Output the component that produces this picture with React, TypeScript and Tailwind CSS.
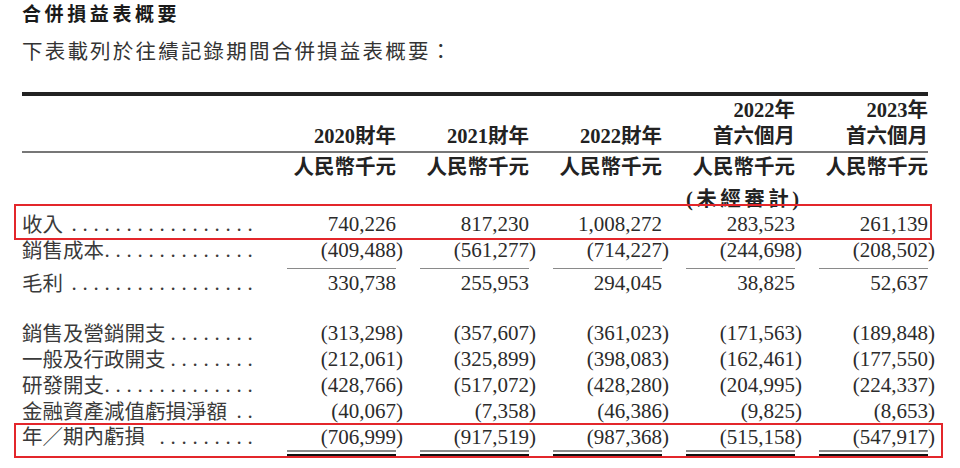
const serif = "font-['Liberation_Serif','Noto_Sans_CJK_TC',serif]";

type Row = { label: string; values: number[]; gapAfterLabel?: boolean };

const fmt = (n: number) => {
  const s = Math.abs(n).toLocaleString('en-US');
  if (n < 0)
    return (
      <>
        ({s}
        <span className="inline-block w-0">)</span>
      </>
    );
  return s;
};

// dotted leader: each ". " is ~11px (21px Times + a little tracking); label text area is 231px wide
const leader = (label: string, gap: number) => {
  const avail = 231 - label.length * 20.5 - gap;
  const k = Math.max(1, Math.floor((avail - 5.5) / 11) + 1);
  return Array(k).fill('.').join(' ');
};

function Label({ text, space }: { text: string; space?: boolean }) {
  const gap = space ? 8 : 0;
  return (
    <div className="flex w-[241px] shrink-0 items-center pr-[10px] text-[#3a3a3a]">
      <span className="shrink-0 text-[20.5px] whitespace-nowrap">{text}</span>
      <span className="flex-1 text-right text-[21px] tracking-[0.25px] whitespace-nowrap">{leader(text, gap)}</span>
    </div>
  );
}

function Col({ children, className = '' }: { children?: React.ReactNode; className?: string }) {
  return <div className={`ml-6 w-[109px] shrink-0 text-right whitespace-nowrap ${className}`}>{children}</div>;
}

const Spacer = () => <div className="w-[241px] shrink-0" />;

function DataRow({ row, h = 'h-[26px]' }: { row: Row; h?: string }) {
  return (
    <div className={`flex items-center ${h}`}>
      <Label text={row.label} space={row.gapAfterLabel} />
      {row.values.map((v, i) => (
        <Col key={i} className="text-[21px] text-[#2b2b2b]">
          {fmt(v)}
        </Col>
      ))}
    </div>
  );
}

function SingleRule() {
  return (
    <div className="flex">
      <Spacer />
      {[0, 1, 2, 3, 4].map((i) => (
        <Col key={i}>
          <div className="h-[1.5px] bg-[#8a8a8a]" />
        </Col>
      ))}
    </div>
  );
}

function DoubleRule() {
  return (
    <div className="flex">
      <Spacer />
      {[0, 1, 2, 3, 4].map((i) => (
        <Col key={i}>
          <div className="h-[2px] bg-[#8a8a8a]" />
          <div className="mt-[2px] h-[4px] bg-[#111]" />
        </Col>
      ))}
    </div>
  );
}

const revenue: Row = { label: '收入', values: [740226, 817230, 1008272, 283523, 261139], gapAfterLabel: true };
const cost: Row = { label: '銷售成本', values: [-409488, -561277, -714227, -244698, -208502] };
const gross: Row = { label: '毛利', values: [330738, 255953, 294045, 38825, 52637], gapAfterLabel: true };
const expenses: Row[] = [
  { label: '銷售及營銷開支', values: [-313298, -357607, -361023, -171563, -189848] },
  { label: '一般及行政開支', values: [-212061, -325899, -398083, -162461, -177550] },
  { label: '研發開支', values: [-428766, -517072, -428280, -204995, -224337] },
  { label: '金融資產減值虧損淨額', values: [-40067, -7358, -46386, -9825, -8653], gapAfterLabel: true },
];
const loss: Row = { label: '年／期內虧損', values: [-706999, -917519, -987368, -515158, -547917], gapAfterLabel: true };

const head = 'text-[20.5px] leading-[26px] font-bold text-[#222]';

export default function App() {
  return (
    <div className={`relative h-[468px] w-[960px] overflow-hidden bg-white pl-[22px] ${serif}`}>
      <h1 className="text-[19px] leading-[30px] font-bold tracking-[3.6px] text-[#1a1a1a]">合併損益表概要</h1>
      <p className="mt-[7px] text-[20.5px] leading-[30px] tracking-[2.2px] text-[#333]">
        下表載列於往績記錄期間合併損益表概要：
      </p>

      <div className="w-[906px]">
        <div className="mt-[25px] h-[4px] bg-[#222]" />

        <div className="mt-[1px] flex h-[26px]">
          <Spacer />
          <Col />
          <Col />
          <Col />
          <Col className={head}>2022年</Col>
          <Col className={head}>2023年</Col>
        </div>
        <div className="flex h-[26px]">
          <Spacer />
          <Col className={head}>2020財年</Col>
          <Col className={head}>2021財年</Col>
          <Col className={head}>2022財年</Col>
          <Col className={head}>首六個月</Col>
          <Col className={head}>首六個月</Col>
        </div>

        <div className="mt-[2px] h-[1.5px] bg-[#777]" />

        <div className="mt-[1.5px] flex h-[26px]">
          <Spacer />
          {[0, 1, 2, 3, 4].map((i) => (
            <Col key={i} className={head}>
              人民幣千元
            </Col>
          ))}
        </div>
        <div className="mt-[6px] flex h-[26px]">
          <Spacer />
          <Col />
          <Col />
          <Col />
          <Col className={`${head} tracking-[3.5px]`}>(未經審計)</Col>
          <Col />
        </div>

        <DataRow row={revenue} />
        <DataRow row={cost} />
        <div className="mt-[3.5px]">
          <SingleRule />
        </div>
        <div className="mt-[2px]">
          <DataRow row={gross} />
        </div>
        <div className="h-[24px]" />
        {expenses.map((r) => (
          <DataRow key={r.label} row={r} />
        ))}
        <DataRow row={loss} h="h-[25px]" />
        <DoubleRule />
      </div>

      <div className="pointer-events-none absolute top-[204px] left-[14px] h-[36px] w-[918px] border-2 border-[#e3262b]" />
      <div className="pointer-events-none absolute top-[423px] left-[14px] h-[35px] w-[929px] border-2 border-[#e3262b]" />
    </div>
  );
}
